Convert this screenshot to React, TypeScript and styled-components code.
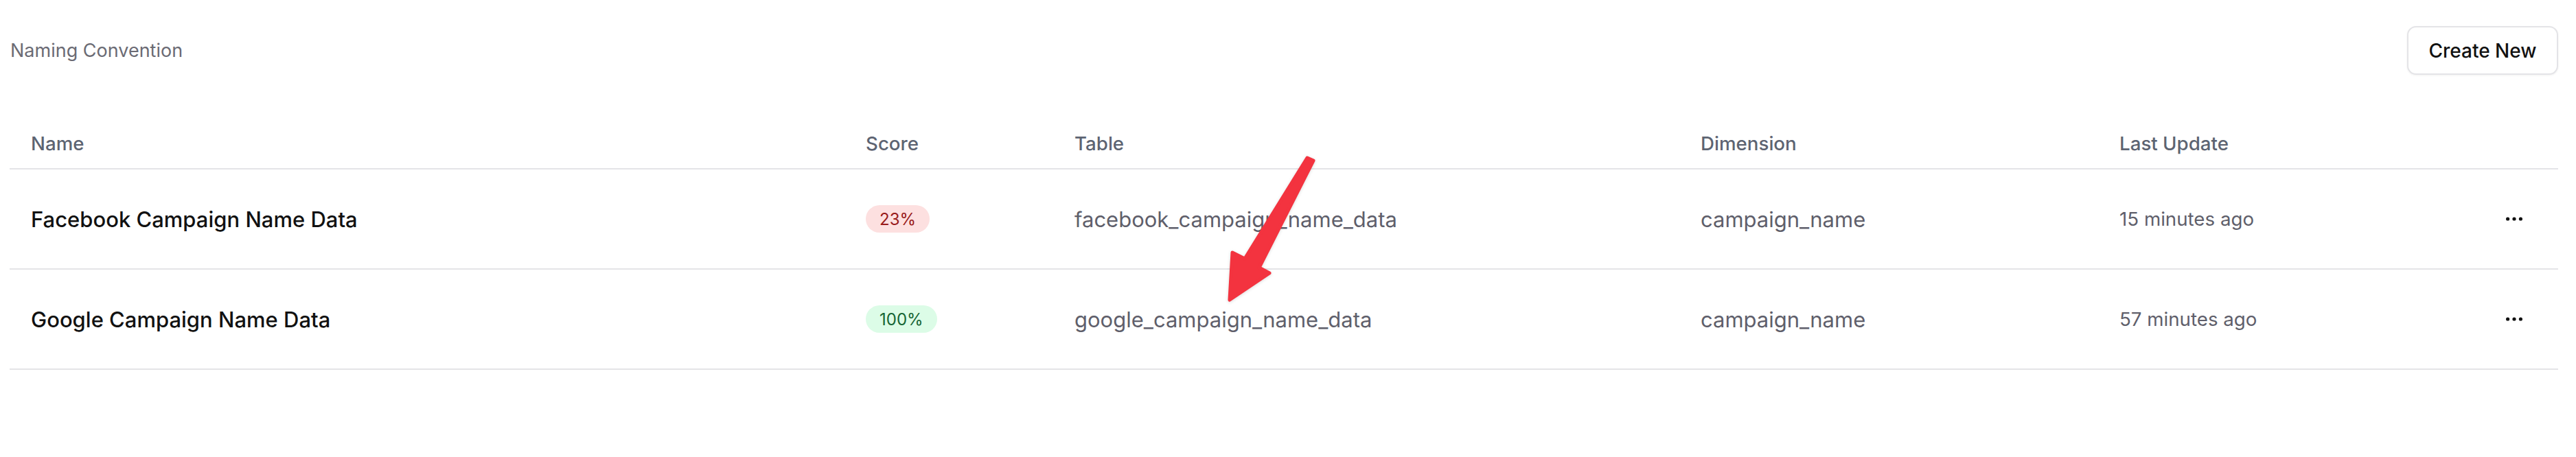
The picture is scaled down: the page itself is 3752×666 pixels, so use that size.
import React from "react";
import styled, { createGlobalStyle } from "styled-components";

const GlobalStyle = createGlobalStyle`
  html, body {
    margin: 0;
    padding: 0;
    background: #ffffff;
    font-family: Inter, "Noto Sans", "Liberation Sans", sans-serif;
    -webkit-font-smoothing: antialiased;
  }
`;

const Page = styled.div`
  position: relative;
  width: 3752px;
  height: 666px;
  box-sizing: border-box;
  padding: 38px 26px 0 14px;
  background: #fff;
`;

const TopBar = styled.div`
  display: flex;
  align-items: center;
  justify-content: space-between;
  height: 71px;
`;

const Title = styled.h1`
  margin: 0 0 0 1px;
  font-size: 27px;
  font-weight: 400;
  color: #6b6b74;
  letter-spacing: 0;
`;

const Button = styled.button`
  height: 71px;
  width: 220px;
  box-sizing: border-box;
  border: 2px solid #e4e4e7;
  border-radius: 13px;
  background: #fff;
  box-shadow: 0 1px 3px rgba(0, 0, 0, 0.06);
  font-family: inherit;
  font-size: 28px;
  font-weight: 500;
  color: #111;
  cursor: pointer;
`;

const Table = styled.div`
  margin-top: 64px;
  display: grid;
  grid-template-columns: 1216px 304px 912px 610px 540px 130px;
`;

const Row = styled.div`
  display: contents;
`;

const Cell = styled.div<{ $head?: boolean; $align?: "left" | "right" }>`
  display: flex;
  align-items: center;
  justify-content: ${(p) => (p.$align === "right" ? "flex-end" : "flex-start")};
  box-sizing: border-box;
  height: ${(p) => (p.$head ? "74px" : "146px")};
  padding: ${(p) => (p.$align === "right" ? "0 52px 0 0" : "0 0 0 31px")};
  border-bottom: 2px solid #e4e4e7;
`;

const HeadText = styled.span`
  font-size: 27.7px;
  font-weight: 500;
  color: #5d6472;
`;

const NameText = styled.span`
  font-size: 31px;
  font-weight: 500;
  color: #111111;
`;

const DataText = styled.span<{ $small?: boolean }>`
  font-size: ${(p) => (p.$small ? "27.7px" : "31px")};
  font-weight: 400;
  color: #5f5f6b;
`;

const Badge = styled.span<{ $tone: "bad" | "good" }>`
  display: inline-flex;
  align-items: center;
  height: 40px;
  padding: 0 20px;
  border-radius: 20px;
  font-size: 24px;
  font-weight: 400;
  background: ${(p) => (p.$tone === "bad" ? "#fde0e0" : "#dcfce7")};
  color: ${(p) => (p.$tone === "bad" ? "#991b1b" : "#166534")};
`;

const MoreButton = styled.button`
  display: flex;
  align-items: center;
  padding: 0;
  border: 0;
  background: transparent;
  cursor: pointer;
`;

const ArrowOverlay = styled.svg`
  position: absolute;
  left: 1780px;
  top: 225px;
  width: 140px;
  height: 220px;
  overflow: visible;
  pointer-events: none;
  filter: drop-shadow(0 1px 2px rgba(0, 0, 0, 0.15));
`;

const Dots = () => (
  <svg width="24" height="6" viewBox="0 0 24 6">
    <circle cx="2.6" cy="3" r="2.6" fill="#111" />
    <circle cx="12" cy="3" r="2.6" fill="#111" />
    <circle cx="21.4" cy="3" r="2.6" fill="#111" />
  </svg>
);

type Item = {
  name: string;
  score: number;
  table: string;
  dimension: string;
  updated: string;
};

const items: Item[] = [
  {
    name: "Facebook Campaign Name Data",
    score: 23,
    table: "facebook_campaign_name_data",
    dimension: "campaign_name",
    updated: "15 minutes ago",
  },
  {
    name: "Google Campaign Name Data",
    score: 100,
    table: "google_campaign_name_data",
    dimension: "campaign_name",
    updated: "57 minutes ago",
  },
];

const headers = ["Name", "Score", "Table", "Dimension", "Last Update"];

export default function App() {
  return (
    <>
      <GlobalStyle />
      <Page>
        <TopBar>
          <Title>Naming Convention</Title>
          <Button>Create New</Button>
        </TopBar>
        <Table>
          <Row>
            {headers.map((h) => (
              <Cell $head key={h}>
                <HeadText>{h}</HeadText>
              </Cell>
            ))}
            <Cell $head />
          </Row>
          {items.map((it) => (
            <Row key={it.name}>
              <Cell>
                <NameText>{it.name}</NameText>
              </Cell>
              <Cell>
                <Badge $tone={it.score >= 50 ? "good" : "bad"}>{it.score}%</Badge>
              </Cell>
              <Cell>
                <DataText>{it.table}</DataText>
              </Cell>
              <Cell>
                <DataText>{it.dimension}</DataText>
              </Cell>
              <Cell>
                <DataText $small>{it.updated}</DataText>
              </Cell>
              <Cell $align="right">
                <MoreButton aria-label="More actions">
                  <Dots />
                </MoreButton>
              </Cell>
            </Row>
          ))}
        </Table>
        <ArrowOverlay viewBox="0 0 140 220">
          <polygon
            points="124,5 133,9 54,165 69,173 11,212 15,143 33,152"
            fill="#f3333f"
            stroke="#f3333f"
            strokeWidth="5"
            strokeLinejoin="round"
          />
        </ArrowOverlay>
      </Page>
    </>
  );
}
